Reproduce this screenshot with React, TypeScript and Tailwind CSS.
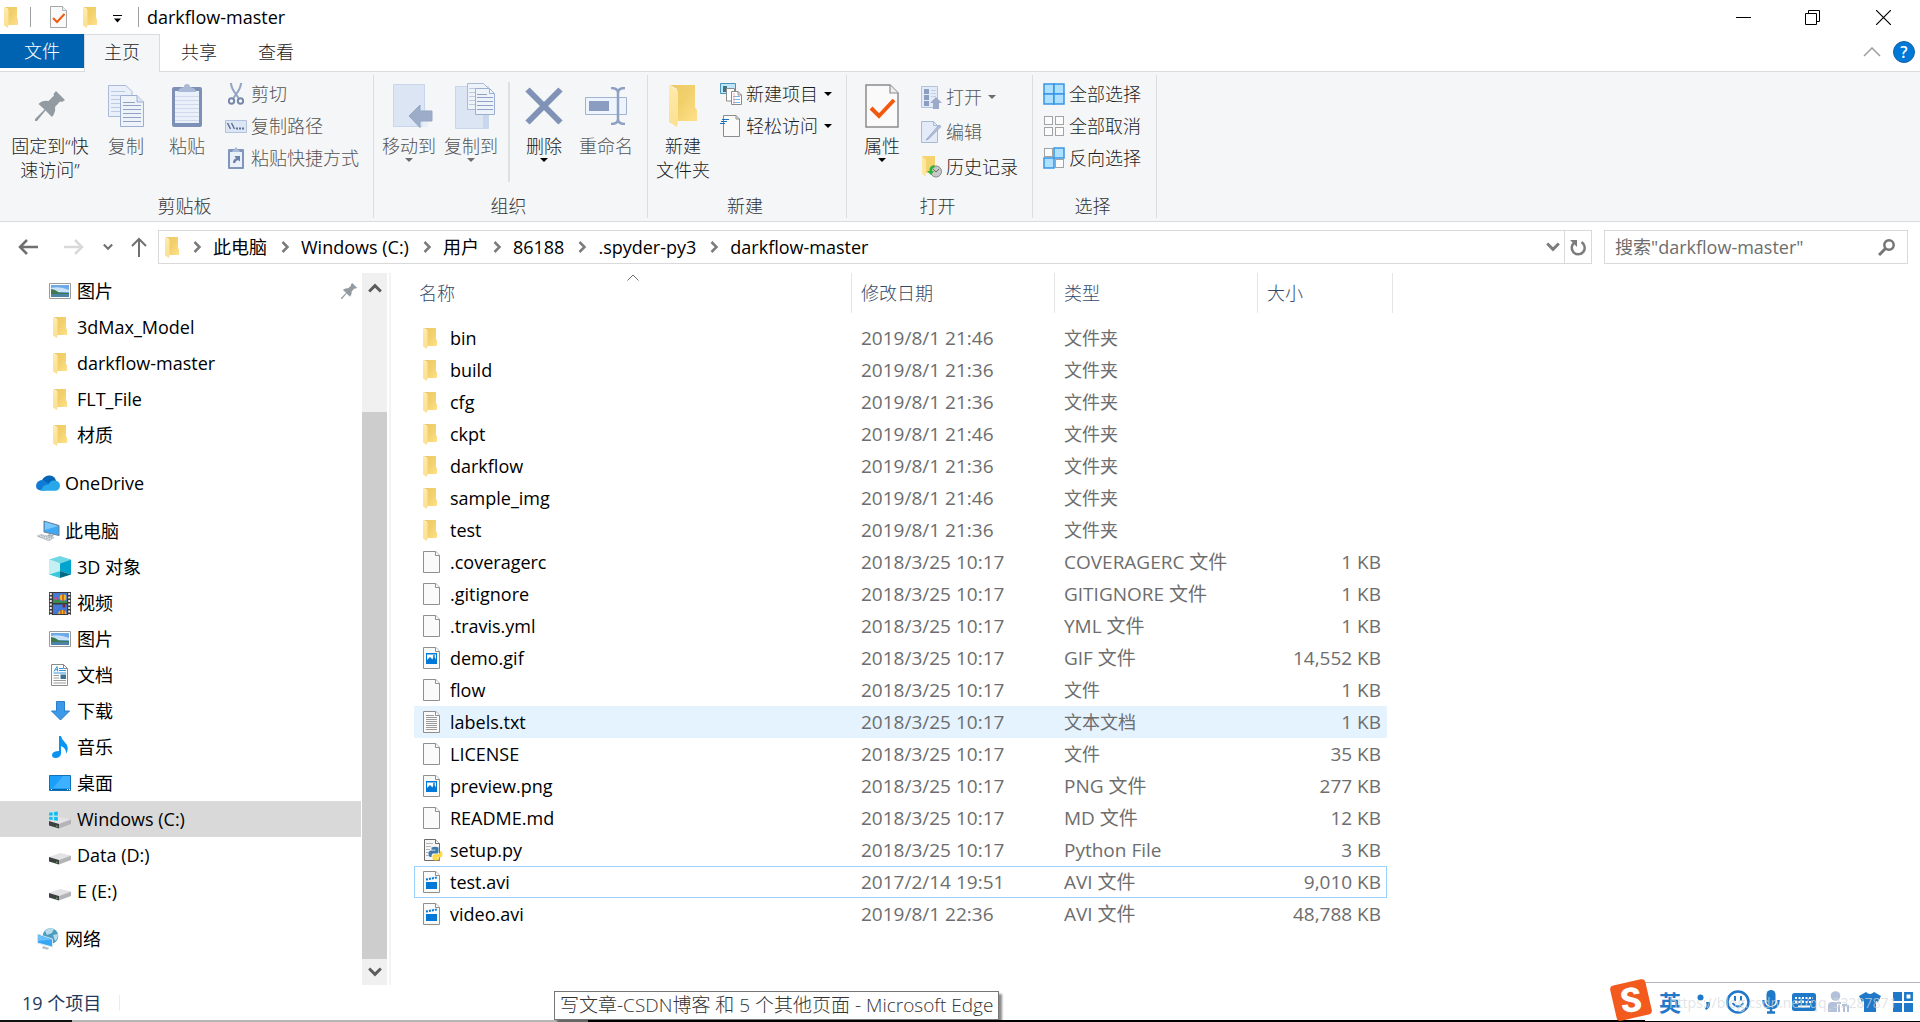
import type { ReactNode } from "react";
import clsx from "clsx";

/* ---------- icons ---------- */

const FolderIcon = ({ className = "w-[14px] h-[21px]" }: { className?: string }) => (
  <svg viewBox="0 0 28 42" className={className}>
    <defs>
      <linearGradient id="folderBack" x1="0" y1="0" x2="1" y2="1">
        <stop offset="0" stopColor="#edc965" />
        <stop offset="0.5" stopColor="#f2d16d" />
        <stop offset="1" stopColor="#ffe08c" />
      </linearGradient>
      <linearGradient id="folderFlap" x1="0" y1="0" x2="0" y2="1">
        <stop offset="0" stopColor="#ffeaa8" />
        <stop offset="1" stopColor="#fbe093" />
      </linearGradient>
    </defs>
    <path d="M1 0h25v22l2 3v11H8V4z" fill="url(#folderBack)" />
    <path d="M0 0l9 6v30l-1 6-8-5z" fill="url(#folderFlap)" />
  </svg>
);

const PageIcon = ({ children }: { children?: ReactNode }) => (
  <svg viewBox="0 0 20 22" className="w-5 h-[22px]">
    <path d="M.5.5h12.3l3.7 3.7v17.3H.5z" fill="#fafafa" stroke="#8f8f8f" />
    <path d="M12.5.5v4h4" fill="#fff" stroke="#8f8f8f" />
    {children}
  </svg>
);

const ImageFileIcon = () => (
  <PageIcon>
    <path d="M3 6h11v11H3z" fill="#0078d7" />
    <path d="M4 7.500h9v5l-1-2-1.500-1-1 3-2.500-2.500L4 13z" fill="#fff" />
    <circle cx="11" cy="9" r="1" fill="#0078d7" />
  </PageIcon>
);

const VideoFileIcon = () => (
  <PageIcon>
    <path d="M3 11h11v7H3z" fill="#0078d7" />
    <path d="M3 8.500l11-2" stroke="#0078d7" strokeWidth="2" strokeDasharray="2 1" />
  </PageIcon>
);

const TextFileIcon = () => (
  <PageIcon>
    <path d="M3 4.500h8M3 6.500h11M3 8.500h11M3 10.500h11M3 12.500h11M3 14.500h11M3 16.500h11M3 18.500h11" stroke="#9a9a9a" />
  </PageIcon>
);

const PythonFileIcon = () => (
  <svg viewBox="0 0 20 22" className="w-5 h-[22px]">
    <path d="M1.500.5h11l4 4v17h-15z" fill="#f6f6f6" stroke="#6b6b6b" />
    <path d="M12.500.5v4h4" fill="#fff" stroke="#6b6b6b" />
    <path d="M3 4.500h7M3 7.500h5M3 10.500h4M3 13.500h3M3 16.500h3" stroke="#b5b5b5" />
    <path d="M8.500 8.500q3.500-1.500 7 0V13q0 1.500-1.500 1.500h-4Q8.500 14.500 8.500 18H7q-1.500-1-1.500-3.500 0-2.500 2-3h5v-.7h-4z" fill="#3d7aab" />
    <path d="M17 12q2.500 0 2.500 3.500 0 2.500-2 3h-4v.8h3v1.200q-3.500 2-7 0V17q0-1.800 2-1.800h3.500Q17 15 17 12z" fill="#ffd946" />
  </svg>
);

const PictureIcon = () => (
  <svg viewBox="0 0 22 16" className="w-[22px] h-4">
    <path d="M.5.5h21v15H.5z" fill="#fff" stroke="#9b9b9b" />
    <path d="M2 2h18v12H2z" fill="#6ea9ea" />
    <path d="M2 5q9-2 18 2v2H2z" fill="#c9e2f7" />
    <path d="M2 6l4 1 4 2.500 10 .5v1H2z" fill="#3f7a4f" />
    <path d="M2 11h18v3H2z" fill="#4c84a8" />
  </svg>
);

const PinIcon = ({ className }: { className: string }) => (
  <svg viewBox="0 0 30 30" className={className}>
    <path d="M21 0l9 9-3 2-2-.5-5 5.500q1 5-3 10l-6.500-6.500L2 30H0v-2l9.500-9.500L3.500 13q4-4 10-3L19 4.500 18.500 3z" fill="#929ba1" />
  </svg>
);

const CloudIcon = () => (
  <svg viewBox="0 0 24 16" className="w-6 h-4 shrink-0">
    <path d="M6 5q3-5 8-4.500Q19 1 20 6l-8 5z" fill="#0364b8" />
    <path d="M5 15.500Q0 15 0 10.500 1 5 7 5l10 6-8 4.500z" fill="#0f7bd4" />
    <path d="M17 5.500Q24 5 24 11q-.5 4.500-5 4.800H5Q7 9 12.500 9.500 14 6 17 5.500z" fill="#28a8ea" />
  </svg>
);

const ComputerIcon = () => (
  <svg viewBox="0 0 24 22" className="w-6 h-[22px] shrink-0">
    <path d="M8 1l15 4.500v10L8 12z" fill="#3fa9f5" stroke="#6d7f8d" />
    <path d="M9 2l13 4L9 10z" fill="#7cc7fb" />
    <path d="M13 14l5 1.500-2 1.500-5-1z" fill="#a7b1b8" />
    <path d="M1 16l4-1.500 13 3-5 3.500z" fill="#dfe3e6" stroke="#a8afb4" strokeWidth=".6" />
    <path d="M3 16.500l11 3M5 15.500l11 2.700" stroke="#8e979d" strokeWidth=".8" strokeDasharray="1.500 1" />
  </svg>
);

const CubeIcon = () => (
  <svg viewBox="0 0 22 22" className="w-[22px] h-[22px]">
    <path d="M11 0l11 3.500-11 4L0 3.500z" fill="#6fd8e4" />
    <path d="M0 3.500l11 4V15L0 18.500z" fill="#c4eff3" />
    <path d="M22 3.500l-11 4V15l11 3.500z" fill="#00a5cf" />
    <path d="M11 15l11 3.500L11 22z" fill="#036a83" />
    <path d="M11 15L0 18.500 11 22z" fill="#38c9dc" />
  </svg>
);

const FilmIcon = () => (
  <svg viewBox="0 0 22 23" className="w-[22px] h-[23px]">
    <path d="M0 0h22v23H0z" fill="#3a3a3a" />
    <path d="M1.800 1v22M20.200 1v22" stroke="#e8e8e8" strokeWidth="2" strokeDasharray="2 1.500" />
    <path d="M4 1h14v10H4zM4 12.500h14V22H4z" fill="#4479d6" />
    <path d="M4 8l4-2 3 3h7v2H4z" fill="#3c8a4c" />
    <circle cx="14" cy="5.500" r="3.300" fill="#f2b91d" />
    <path d="M14 2v7" stroke="#a32020" />
    <circle cx="7" cy="6.500" r="1.500" fill="#d9468a" />
    <circle cx="15" cy="14" r="1.500" fill="#8b2020" />
    <path d="M9 22q1-4 4.500-4t4 4z" fill="#f2b91d" />
    <path d="M12 18v4M15 18v4" stroke="#b02a2a" />
  </svg>
);

const DocumentIcon = () => (
  <svg viewBox="0 0 18 22" className="w-[18px] h-[22px]">
    <path d="M.5.5h12l4 4v17H.5z" fill="#fff" stroke="#8b8b8b" />
    <path d="M12.500.5v4h4" fill="none" stroke="#8b8b8b" />
    <path d="M3 7.500l3-5 .8 5M4 5.800h2.500M8 4.500h4M8 6.500h7M2.500 9h12.500" stroke="#2f97d8" fill="none" />
    <path d="M2.500 11.500H8M2.500 14H8M2.500 16.500H15M2.500 19H15" stroke="#9b9b9b" />
    <path d="M9.500 10.500H15V15H9.500z" fill="#3d7293" />
  </svg>
);

const DownloadIcon = () => (
  <svg viewBox="0 0 19 20" className="w-[19px] h-5">
    <path d="M5.500.5h8V10h5l-9 9-9-9h5z" fill="#3c98e8" stroke="#2b7ec9" />
  </svg>
);

const MusicIcon = () => (
  <svg viewBox="0 0 16 22" className="w-4 h-[22px]">
    <path d="M7 0h2q.5 3.500 4 6.500Q18 11 14 18q.5-6-5-8v8q-1 4-5.500 4Q0 22 0 19q.5-4 7-4z" fill="#0894f0" />
  </svg>
);

const DesktopIcon = () => (
  <svg viewBox="0 0 22 16" className="w-[22px] h-4">
    <path d="M.5.5h21v15H.5z" fill="#1aa0fb" stroke="#1172b5" />
    <path d="M14 1h7v12H4z" fill="#3db1ff" />
    <path d="M1 14.500h20" stroke="#0d5f9d" />
    <path d="M2 14.500h1M18 14.500h1M20 14.500h1" stroke="#fff" />
  </svg>
);

const DriveIcon = ({ system }: { system?: boolean }) => (
  <svg viewBox="0 0 22 20" className="w-[22px] h-5">
    <path d="M0 12l11-4 11 2.500L10 15z" fill="#e3e3e5" />
    <path d="M10 15l12-4.500V15l-12 4.500z" fill="#b4b4b8" />
    <path d="M0 12l10 3v4.500l-10-3z" fill="#3d3f40" />
    <path d="M7 16.500l1.500.4v1L7 17.500z" fill="#43e05a" />
    {system && (
      <path d="M0 3.500L3.800 3v3.800H0zM4.800 2.900L9 2.300v4.500H4.800zM0 7.700h3.800v3.600L0 10.800zM4.800 7.700H9v4.200l-4.200-.5z" fill="#0bbbf0" stroke="#e6f9ff" strokeWidth=".3" />
    )}
  </svg>
);

const NetworkIcon = () => (
  <svg viewBox="0 0 22 22" className="w-[22px] h-[22px]">
    <circle cx="13.500" cy="8" r="7.800" fill="#4a9dc0" />
    <path d="M8 3q4-4 9-2l-2 4-5 2zM16 7l5-1q0 5-3 7z" fill="#b7dcea" />
    <path d="M.5 6l15 5v8L.5 15z" fill="#36a6f5" stroke="#d6e6ef" />
    <path d="M1 7l14 4.500L1 13z" fill="#6bc0fa" />
    <path d="M6 18l6 2-1 1.800-6-1.500z" fill="#b3bcc2" />
  </svg>
);

const CheckedPageIcon = ({ className }: { className: string }) => (
  <svg viewBox="0 0 34 44" className={className}>
    <path d="M1 1h24l8 8v34H1z" fill="#fafafa" stroke="#8c8c8c" strokeWidth="1.500" />
    <path d="M25 1v8h8" fill="#eee" stroke="#8c8c8c" strokeWidth="1.200" />
    <path d="M6 24l8 8 15-16" fill="none" stroke="#f2590f" strokeWidth="4" />
  </svg>
);

const CopyIcon = () => (
  <svg viewBox="0 0 36 42" className="w-9 h-[42px]">
    <path d="M.5.5H18l6 6v25H.5z" fill="#eaf0f9" stroke="#a9b9d6" />
    <path d="M3 6.500h14M3 10.500h9M3 14.500h9M3 18.500h9M3 22.500h9M3 26.500h9" stroke="#bccae2" />
    <path d="M12.500 10.500H29l6.500 6.500v24.500h-23z" fill="#eef3fa" stroke="#9dafd0" />
    <path d="M29 10.500V17h6.500" fill="#dce6f5" stroke="#9dafd0" />
    <path d="M15 17.500h12M15 20.500h18M15 24.500h18M15 28.500h18M15 32.500h18M15 36.500h18" stroke="#8fa2c4" />
  </svg>
);

const ClipboardIcon = () => (
  <svg viewBox="0 0 30 43" className="w-[30px] h-[43px]">
    <rect y="3" width="30" height="40" rx="2" fill="#7d90b6" />
    <path d="M3 7h24v32H3z" fill="#eaf0fa" />
    <path d="M3 12.500h24M3 16.500h24M3 20.500h24M3 24.500h24M3 28.500h24M3 32.500h24M3 36.500h24" stroke="#cfdaed" />
    <path d="M6 8q0-4 6-5 0-3 3-3t3 3q6 1 6 5z" fill="#a9b9d6" />
  </svg>
);

const ScissorsIcon = () => (
  <svg viewBox="0 0 16 22" className="w-4 h-[22px]">
    <path d="M3 0q0 5 5.500 12l2 3M13 0q0 5-5.500 12l-2 3" fill="none" stroke="#93a4c2" strokeWidth="2" />
    <circle cx="3.500" cy="18" r="2.700" fill="none" stroke="#7688ab" strokeWidth="2" />
    <circle cx="12.500" cy="18" r="2.700" fill="none" stroke="#7688ab" strokeWidth="2" />
  </svg>
);

const CopyPathIcon = () => (
  <svg viewBox="0 0 22 13" className="w-[22px] h-[13px]">
    <path d="M.5.5h21v12H.5z" fill="#dce6f5" stroke="#b3c2dc" />
    <path d="M2.500 3l3 6M6.500 3l3 6" stroke="#5f7296" strokeWidth="1.500" />
    <path d="M11 8.500h9" stroke="#5f7296" strokeWidth="2" strokeDasharray="2 1" />
  </svg>
);

const PasteShortcutIcon = () => (
  <svg viewBox="0 0 16 22" className="w-4 h-[22px]">
    <rect y="2" width="16" height="20" rx="1" fill="#8295ba" />
    <path d="M2 5h12v15H2z" fill="#eaf0fa" />
    <path d="M4 5q0-2 2.500-2.500Q7 0 8 0t1.500 2.500Q12 3 12 5z" fill="#a9b9d6" />
    <path d="M5 16q0-4 3-4.500L6.500 9H12v5.500L10 13q-2 .5-3 3z" fill="#6d81a8" />
  </svg>
);

const MoveToIcon = () => (
  <svg viewBox="0 0 40 44" className="w-10 h-11 ml-2">
    <path d="M.5.5h31v42H.5z" fill="#dbe5f4" stroke="#c8d5ea" />
    <path d="M32 24l3 3v16h-6z" fill="#e8eff9" />
    <path d="M16 32l11-11v6h12v10H27v6.500z" fill="#9dadc9" stroke="#93a5c4" />
  </svg>
);

const CopyToIcon = () => (
  <svg viewBox="0 0 40 46" className="w-10 h-[46px] ml-2">
    <path d="M.5 3.500h33v42H.5z" fill="#dbe5f4" stroke="#c8d5ea" />
    <path d="M28 31h6v14h-6z" fill="#c9d7ec" />
    <path d="M12.500.5h16l4 4v22h-20z" fill="#eef3fa" stroke="#a9b9d6" />
    <path d="M14 5.500h10M14 9.500h6M14 13.500h6M14 17.500h6M14 21.500h6" stroke="#bccae2" />
    <path d="M20.500 5.500h14l5 5v21h-19z" fill="#eef3fa" stroke="#9dafd0" />
    <path d="M34.500 5.500v5h5" fill="none" stroke="#9dafd0" />
    <path d="M22 11.500h10M22 14.500h16M22 18.500h16M22 22.500h16M22 26.500h16" stroke="#8fa2c4" />
  </svg>
);

const DeleteIcon = () => (
  <svg viewBox="0 0 38 38" className="w-[38px] h-[38px]">
    <path d="M2.500 2.500l33 33M35.500 2.500l-33 33" stroke="#8093b6" strokeWidth="6" />
  </svg>
);

const RenameIcon = () => (
  <svg viewBox="0 0 42 38" className="w-[42px] h-[38px]">
    <path d="M.5 10.500h41v17H.5z" fill="#eef4fd" stroke="#a2b3d0" />
    <path d="M4 14h20v10H4z" fill="#8a9cbf" />
    <path d="M26 1q7 0 7 5v26q0 5-7 5M40 1q-7 0-7 5v26q0 5 7 5" fill="none" stroke="#8fa1c2" strokeWidth="2.500" />
  </svg>
);

const NewItemIcon = () => (
  <svg viewBox="0 0 22 22" className="w-[22px] h-[22px]">
    <path d="M.5.5h15v10H.5z" fill="#bfe5f8" stroke="#4894b8" />
    <path d="M3 3h4v6H3z" fill="#44727c" />
    <path d="M6.500 5.500h8V18h-8z" fill="#fff" stroke="#8c8c8c" />
    <path d="M11.500 8.500H18l3.500 3.500v9.500h-10z" fill="#fff" stroke="#8c8c8c" />
    <path d="M18 8.500V12h3.500" fill="none" stroke="#8c8c8c" />
    <path d="M13 13.500h7M13 16.500h7M13 19.500h7" stroke="#7db6e8" />
    <path d="M14 10v11" stroke="#e79aa4" strokeWidth=".8" />
  </svg>
);

const EasyAccessIcon = () => (
  <svg viewBox="0 0 22 22" className="w-[22px] h-[22px]">
    <path d="M3.500.5H16L19.500 4v17.500h-16z" fill="#fafafa" stroke="#8c8c8c" />
    <path d="M16 .5V4h3.500" fill="none" stroke="#8c8c8c" />
    <path d="M2 4.500h7M1 6.500h6M0 8.500h5" stroke="#1d6fb8" />
  </svg>
);

const OpenIcon = () => (
  <svg viewBox="0 0 21 23" className="w-[21px] h-[23px]">
    <path d="M.5.5h16v21H.5z" fill="#e3ebf8" stroke="#b3c2dc" />
    <path d="M3 3h5v5H3zM3 9h5v5H3zM3 15h5v5H3z" fill="#8b9dc1" />
    <path d="M10 4.500h5M10 7.500h5M10 10.500h5" stroke="#c3d0e5" />
    <path d="M15 11l6 6h-3v6h-6v-6H9z" fill="#9baaca" />
  </svg>
);

const EditIcon = () => (
  <svg viewBox="0 0 21 22" className="w-[21px] h-[22px]">
    <path d="M.5.5h12l4 4v17H.5z" fill="#e3ebf8" stroke="#a9b9d6" />
    <path d="M12.500.5v4h4" fill="none" stroke="#a9b9d6" />
    <path d="M5 19L18 4l2 1.500L7.500 18z" fill="#b4c1da" stroke="#8ea0c2" strokeWidth=".8" />
  </svg>
);

const HistoryIcon = () => (
  <svg viewBox="0 0 21 22" className="w-[21px] h-[22px]">
    <path d="M1 0h13v17H4z" fill="#f5d36e" />
    <path d="M1 0l4 4v17l-4-3z" fill="#fde6a0" />
    <circle cx="15" cy="15.500" r="5.500" fill="#c8c8c8" stroke="#888" />
    <path d="M12 13l3 3 3-3" fill="none" stroke="#666" />
    <path d="M13 9Q8 10 8.500 15H6l4 4 3-4h-2q0-3 3-4z" fill="#2fb43a" />
  </svg>
);

const Tile = ({ x, y, on }: { x: number; y: number; on?: boolean }) =>
  on ? (
    <rect x={x} y={y} width="10" height="10" fill="#aee0ff" stroke="#3795e6" strokeWidth="1.500" />
  ) : (
    <rect x={x + 0.5} y={y + 0.5} width="8" height="8" fill="#fcfcfc" stroke="#a3a3a3" />
  );

const TilesIcon = ({ on }: { on: boolean[] }) => (
  <svg viewBox="0 0 22 22" className="w-[22px] h-[22px]">
    <Tile x={1} y={1} on={on[0]} />
    <Tile x={on[1] ? 11 : 12} y={1} on={on[1]} />
    <Tile x={1} y={on[2] ? 11 : 12} on={on[2]} />
    <Tile x={on[3] ? 11 : 12} y={on[3] ? 11 : 12} on={on[3]} />
  </svg>
);

const Caret = ({ className }: { className?: string }) => (
  <svg viewBox="0 0 8 4" className={clsx("w-2 h-1", className)}>
    <path d="M0 0h8L4 4z" fill="currentColor" />
  </svg>
);

const Chevron = ({ dir, className }: { dir: "up" | "down" | "right"; className: string }) => (
  <svg viewBox="0 0 12 12" className={className}>
    <path
      d={dir === "up" ? "M1 9l5-5 5 5" : dir === "down" ? "M1 3l5 5 5-5" : "M3.500 1l5 5-5 5"}
      fill="none"
      stroke="currentColor"
      strokeWidth="2.500"
    />
  </svg>
);

/* ---------- ribbon ---------- */

type BigProps = { icon: ReactNode; lines: string[]; disabled?: boolean; caret?: boolean; className: string };

const BigButton = ({ icon, lines, disabled, caret, className }: BigProps) => (
  <button disabled={disabled} className={clsx("flex flex-col items-center shrink-0 pt-1", disabled ? "text-[#555]" : "text-[#1c1c1c]", className)}>
    <span className="h-[55px] pb-[2px] flex items-center justify-center">{icon}</span>
    {lines.map((l) => (
      <span key={l} className="leading-6 whitespace-nowrap">{l}</span>
    ))}
    {caret && <Caret className={disabled ? "text-[#6d6d6d]" : "text-black"} />}
  </button>
);

type SmallProps = { icon: ReactNode; label: string; disabled?: boolean; caret?: boolean };

const SmallButton = ({ icon, label, disabled, caret }: SmallProps) => (
  <button disabled={disabled} className={clsx("flex items-center gap-1 h-8", disabled ? "text-[#555]" : "text-[#1c1c1c]")}>
    <span className="w-[22px] flex justify-center">{icon}</span>
    <span className="whitespace-nowrap">{label}</span>
    {caret && <Caret className={clsx("ml-[2px]", disabled ? "text-[#6d6d6d]" : "text-black")} />}
  </button>
);

const Group = ({ label, className, children }: { label: string; className: string; children: ReactNode }) => (
  <section className={clsx("flex flex-col shrink-0 border-r border-[#dcdddf]", className)}>
    <div className="flex grow pl-1">{children}</div>
    <h2 className="pr-1 text-center leading-6 text-[#333]">{label}</h2>
  </section>
);

const Ribbon = () => (
  <div className="flex bg-[#f5f6f7] border-y border-[#dadbdc] h-[151px] py-[3px] font-light">
    <Group label="剪贴板" className="w-[374px]">
      <BigButton className="w-[92px]" icon={<PinIcon className="w-[30px] h-[30px]" />} lines={["固定到“快", "速访问”"]} />
      <BigButton className="w-[60px]" disabled icon={<CopyIcon />} lines={["复制"]} />
      <BigButton className="w-[62px]" disabled icon={<ClipboardIcon />} lines={["粘贴"]} />
      <div className="pt-[3px] pl-[7px]">
        <SmallButton disabled icon={<ScissorsIcon />} label="剪切" />
        <SmallButton disabled icon={<CopyPathIcon />} label="复制路径" />
        <SmallButton disabled icon={<PasteShortcutIcon />} label="粘贴快捷方式" />
      </div>
    </Group>
    <Group label="组织" className="w-[274px]">
      <BigButton className="w-[62px]" disabled caret icon={<MoveToIcon />} lines={["移动到"]} />
      <BigButton className="w-[62px]" disabled caret icon={<CopyToIcon />} lines={["复制到"]} />
      <div className="w-[2px] h-[100px] mt-[7px] ml-[6px] bg-[#dfe0e2]" />
      <BigButton className="w-[68px]" caret icon={<DeleteIcon />} lines={["删除"]} />
      <BigButton className="w-14" disabled icon={<RenameIcon />} lines={["重命名"]} />
    </Group>
    <Group label="新建" className="w-[199px]">
      <BigButton className="w-[62px]" icon={<FolderIcon className="w-7 h-[42px]" />} lines={["新建", "文件夹"]} />
      <div className="pt-[3px] pl-[6px]">
        <SmallButton caret icon={<NewItemIcon />} label="新建项目" />
        <SmallButton caret icon={<EasyAccessIcon />} label="轻松访问" />
      </div>
    </Group>
    <Group label="打开" className="w-[186px]">
      <BigButton className="w-[62px]" caret icon={<CheckedPageIcon className="w-[34px] h-11" />} lines={["属性"]} />
      <div className="pt-[6px] pl-[7px] flex flex-col gap-[3px]">
        <SmallButton disabled caret icon={<OpenIcon />} label="打开" />
        <SmallButton disabled icon={<EditIcon />} label="编辑" />
        <SmallButton icon={<HistoryIcon />} label="历史记录" />
      </div>
    </Group>
    <Group label="选择" className="w-[124px]">
      <div className="pt-[3px] pl-[6px]">
        <SmallButton icon={<TilesIcon on={[true, true, true, true]} />} label="全部选择" />
        <SmallButton icon={<TilesIcon on={[false, false, false, false]} />} label="全部取消" />
        <SmallButton icon={<TilesIcon on={[false, true, true, false]} />} label="反向选择" />
      </div>
    </Group>
  </div>
);

/* ---------- title bar and tabs ---------- */

const TitleBar = () => (
  <header className="flex items-center h-[34px] text-black">
    <div className="flex items-center grow pl-1">
      <FolderIcon />
      <span className="w-px h-5 ml-3 bg-[#a0a0a0]" />
      <button aria-label="属性" className="ml-[19px]"><CheckedPageIcon className="w-[17px] h-[22px]" /></button>
      <button aria-label="新建文件夹" className="ml-4"><FolderIcon /></button>
      <button aria-label="自定义快速访问工具栏" className="ml-4 pt-[3px]">
        <svg viewBox="0 0 9 8" className="w-[9px] h-2"><path d="M0 .5h9" stroke="#000" /><path d="M1 3.500h7L4.500 7.500z" /></svg>
      </button>
      <span className="w-px h-5 ml-4 bg-[#a0a0a0]" />
      <h1 className="ml-2 leading-6">darkflow-master</h1>
    </div>
    <button aria-label="最小化" className="w-[69px] flex justify-center">
      <svg viewBox="0 0 15 15" className="w-[15px] h-[15px]"><path d="M0 7.500h15" stroke="#000" /></svg>
    </button>
    <button aria-label="还原" className="w-[69px] flex justify-center">
      <svg viewBox="0 0 15 15" className="w-[15px] h-[15px]"><path d="M.5 3.500h11v11H.5zM3.500 3.500v-3h11v11h-3" fill="none" stroke="#000" /></svg>
    </button>
    <button aria-label="关闭" className="w-[73px] flex justify-center">
      <svg viewBox="0 0 15 15" className="w-[15px] h-[15px]"><path d="M0 0l15 15M15 0L0 15" stroke="#000" strokeWidth="1.200" /></svg>
    </button>
  </header>
);

const Tabs = () => (
  <nav className="flex h-[37px] text-[#1c1c1c] font-light">
    <button className="w-[84px] h-[34px] bg-[#0063b1] text-white">文件</button>
    <button className="w-[76px] -mb-px pb-[3px] relative bg-[#f5f6f7] border border-b-0 border-[#dadbdc]">主页</button>
    <button className="w-[78px] pb-[2px]">共享</button>
    <button className="w-[76px] pb-[2px]">查看</button>
    <div className="grow flex items-center justify-end gap-3 pr-[5px] pb-[2px]">
      <button aria-label="最小化功能区" className="text-[#9d9d9d]">
        <svg viewBox="0 0 18 10" className="w-[18px] h-[10px]"><path d="M1 9l8-8 8 8" fill="none" stroke="currentColor" strokeWidth="1.500" /></svg>
      </button>
      <button className="w-[22px] h-[22px] rounded-full bg-[#0078d7] border border-[#1060a8] text-white text-base leading-5 font-semibold">?</button>
    </div>
  </nav>
);

/* ---------- address row ---------- */

const crumbs = ["此电脑", "Windows (C:)", "用户", "86188", ".spyder-py3", "darkflow-master"];

const AddressBar = () => (
  <div className="flex items-center pt-2 pr-3 h-[42px] text-black">
    <div className="flex items-center w-[158px] shrink-0 text-[#707070]">
      <button aria-label="后退" className="ml-[18px]">
        <svg viewBox="0 0 20 16" className="w-5 h-4"><path d="M20 8H2M9 1L2 8l7 7" fill="none" stroke="currentColor" strokeWidth="2.500" /></svg>
      </button>
      <button aria-label="前进" className="ml-[26px] text-[#d9d9d9]">
        <svg viewBox="0 0 20 16" className="w-5 h-4"><path d="M0 8h18M11 1l7 7-7 7" fill="none" stroke="currentColor" strokeWidth="2.500" /></svg>
      </button>
      <button aria-label="最近浏览的位置" className="ml-[19px]"><Chevron dir="down" className="w-[10px] h-[10px]" /></button>
      <button aria-label="上移" className="ml-[18px]">
        <svg viewBox="0 0 16 20" className="w-4 h-5"><path d="M8 20V2M1 9l7-7 7 7" fill="none" stroke="currentColor" strokeWidth="2" /></svg>
      </button>
    </div>
    <div className="flex grow h-[34px] border border-[#d9d9d9]">
      <div className="flex items-center grow pl-[6px]">
        <FolderIcon />
        {crumbs.map((c) => (
          <span key={c} className="flex items-center">
            <Chevron dir="right" className="w-3 h-3 ml-3 mr-[10px] text-[#7c7c7c]" />
            <a href="#" className="whitespace-nowrap">{c}</a>
          </span>
        ))}
      </div>
      <button aria-label="上一个位置" className="px-1 text-[#7c7c7c]"><Chevron dir="down" className="w-[14px] h-[14px]" /></button>
      <button aria-label="刷新" className="w-[27px] border-l border-[#d9d9d9] flex items-center justify-center">
        <svg viewBox="0 0 17 17" className="w-[17px] h-[17px]">
          <path d="M11.500 3.200a6.500 6.500 0 1 1-7 .3" fill="none" stroke="#7c7c7c" strokeWidth="2.500" />
          <path d="M0 1h7v7z" fill="#7c7c7c" />
        </svg>
      </button>
    </div>
    <label className="flex items-center w-[304px] h-[34px] ml-3 pl-[10px] pr-3 border border-[#d9d9d9]">
      <input type="text" aria-label="搜索" placeholder={'搜索"darkflow-master"'} className="grow min-w-0 outline-none placeholder:text-[#6d6d6d]" />
      <svg viewBox="0 0 17 17" className="w-[17px] h-[17px]">
        <circle cx="11" cy="6" r="4.700" fill="none" stroke="#757575" strokeWidth="2.500" />
        <path d="M8 9l-7 7" stroke="#757575" strokeWidth="3" />
      </svg>
    </label>
  </div>
);

/* ---------- navigation pane ---------- */

type NavItem = { label: string; icon: ReactNode; top?: boolean; pinned?: boolean; active?: boolean };

const navSections: NavItem[][] = [
  [
    { label: "图片", icon: <PictureIcon />, pinned: true },
    { label: "3dMax_Model", icon: <FolderIcon /> },
    { label: "darkflow-master", icon: <FolderIcon /> },
    { label: "FLT_File", icon: <FolderIcon /> },
    { label: "材质", icon: <FolderIcon /> },
  ],
  [{ label: "OneDrive", icon: <CloudIcon />, top: true }],
  [
    { label: "此电脑", icon: <ComputerIcon />, top: true },
    { label: "3D 对象", icon: <CubeIcon /> },
    { label: "视频", icon: <FilmIcon /> },
    { label: "图片", icon: <PictureIcon /> },
    { label: "文档", icon: <DocumentIcon /> },
    { label: "下载", icon: <DownloadIcon /> },
    { label: "音乐", icon: <MusicIcon /> },
    { label: "桌面", icon: <DesktopIcon /> },
    { label: "Windows (C:)", icon: <DriveIcon system />, active: true },
    { label: "Data (D:)", icon: <DriveIcon /> },
    { label: "E (E:)", icon: <DriveIcon /> },
  ],
  [{ label: "网络", icon: <NetworkIcon />, top: true }],
];

const Sidebar = () => (
  <aside className="flex w-[391px] shrink-0 border-r-2 border-[#f3f3f3] text-black">
    <nav className="w-[361px] flex flex-col gap-3">
      {navSections.map((items, i) => (
        <ul key={i}>
          {items.map((it) => (
            <li key={it.label}>
              <a
                href="#"
                className={clsx("flex items-center h-9 gap-[6px] pr-[4px]", it.top ? "pl-[37px]" : "pl-[49px]", it.active && "bg-[#d9d9d9]")}
              >
                <span className="w-[22px] flex justify-center shrink-0">{it.icon}</span>
                <span className="grow">{it.label}</span>
                {it.pinned && <PinIcon className="w-4 h-4" />}
              </a>
            </li>
          ))}
        </ul>
      ))}
    </nav>
    <div className="w-[25px] ml-px bg-[#f0f0f0] flex flex-col items-center text-[#5c5c5c]">
      <button aria-label="向上滚动" className="h-[139px] pt-2 flex items-start"><Chevron dir="up" className="w-[14px] h-[14px]" /></button>
      <div className="w-full grow bg-[#cdcdcd]" />
      <button aria-label="向下滚动" className="h-[26px]"><Chevron dir="down" className="w-[14px] h-[14px]" /></button>
    </div>
  </aside>
);

/* ---------- file list ---------- */

type FileRow = { name: string; date: string; type: string; size?: string; icon: ReactNode; state?: "hover" | "focus" };

const files: FileRow[] = [
  { name: "bin", date: "2019/8/1 21:46", type: "文件夹", icon: <FolderIcon /> },
  { name: "build", date: "2019/8/1 21:36", type: "文件夹", icon: <FolderIcon /> },
  { name: "cfg", date: "2019/8/1 21:36", type: "文件夹", icon: <FolderIcon /> },
  { name: "ckpt", date: "2019/8/1 21:46", type: "文件夹", icon: <FolderIcon /> },
  { name: "darkflow", date: "2019/8/1 21:36", type: "文件夹", icon: <FolderIcon /> },
  { name: "sample_img", date: "2019/8/1 21:46", type: "文件夹", icon: <FolderIcon /> },
  { name: "test", date: "2019/8/1 21:36", type: "文件夹", icon: <FolderIcon /> },
  { name: ".coveragerc", date: "2018/3/25 10:17", type: "COVERAGERC 文件", size: "1 KB", icon: <PageIcon /> },
  { name: ".gitignore", date: "2018/3/25 10:17", type: "GITIGNORE 文件", size: "1 KB", icon: <PageIcon /> },
  { name: ".travis.yml", date: "2018/3/25 10:17", type: "YML 文件", size: "1 KB", icon: <PageIcon /> },
  { name: "demo.gif", date: "2018/3/25 10:17", type: "GIF 文件", size: "14,552 KB", icon: <ImageFileIcon /> },
  { name: "flow", date: "2018/3/25 10:17", type: "文件", size: "1 KB", icon: <PageIcon /> },
  { name: "labels.txt", date: "2018/3/25 10:17", type: "文本文档", size: "1 KB", icon: <TextFileIcon />, state: "hover" },
  { name: "LICENSE", date: "2018/3/25 10:17", type: "文件", size: "35 KB", icon: <PageIcon /> },
  { name: "preview.png", date: "2018/3/25 10:17", type: "PNG 文件", size: "277 KB", icon: <ImageFileIcon /> },
  { name: "README.md", date: "2018/3/25 10:17", type: "MD 文件", size: "12 KB", icon: <PageIcon /> },
  { name: "setup.py", date: "2018/3/25 10:17", type: "Python File", size: "3 KB", icon: <PythonFileIcon /> },
  { name: "test.avi", date: "2017/2/14 19:51", type: "AVI 文件", size: "9,010 KB", icon: <VideoFileIcon />, state: "focus" },
  { name: "video.avi", date: "2019/8/1 22:36", type: "AVI 文件", size: "48,788 KB", icon: <VideoFileIcon /> },
];

const Th = ({ label, span, sorted }: { label: string; span?: number; sorted?: boolean }) => (
  <th colSpan={span} className="p-0 pb-[9px] font-light text-left">
    <div className={clsx("relative flex items-center h-10 border-r border-[#e5e5e5]", sorted ? "pl-[5px]" : "pl-[9px]")}>
      {label}
      {sorted && (
        <svg viewBox="0 0 12 7" className="absolute top-px left-1/2 w-3 h-[7px] -translate-x-1/2">
          <path d="M.5 6.500L6 1l5.500 5.500" fill="none" stroke="#6d6d6d" />
        </svg>
      )}
    </div>
  </th>
);

const FileList = () => (
  <main className="grow pl-[23px]">
    <table className="table-fixed w-[979px] border-separate border-spacing-0 text-[#6d6d6d]">
      <colgroup>
        <col className="w-[438px]" />
        <col className="w-[203px]" />
        <col className="w-[203px]" />
        <col className="w-[129px]" />
        <col className="w-[6px]" />
      </colgroup>
      <thead className="text-[#34496a]">
        <tr>
          <Th label="名称" sorted />
          <Th label="修改日期" />
          <Th label="类型" />
          <Th label="大小" span={2} />
        </tr>
      </thead>
      <tbody>
        {files.map((f) => {
          const cell = clsx(
            "p-0 h-8 leading-6 border-y",
            f.state === "focus" ? "border-[#99d1ff]" : "border-transparent",
            f.state === "hover" && "bg-[#e5f3ff]"
          );
          return (
            <tr key={f.name}>
              <td className={clsx(cell, "border-l text-black")}>
                <div className="flex items-center gap-[9px] pl-2 h-[30px]">
                  <span className="w-[18px] shrink-0">{f.icon}</span>
                  {f.name}
                </div>
              </td>
              <td className={clsx(cell, "pl-[9px] text-[19px]")}>{f.date}</td>
              <td className={clsx(cell, "pl-[9px]", /^[A-Z]/.test(f.type) && "text-[19px]")}>{f.type}</td>
              <td className={clsx(cell, "border-r pr-[5px] text-right text-[19px]")}>{f.size}</td>
            </tr>
          );
        })}
      </tbody>
    </table>
  </main>
);

/* ---------- status bar, tooltip, input method bar ---------- */

const ImeBar = () => (
  <div className="absolute right-0 bottom-[1px] w-[311px] h-[43px] flex items-end text-[#1f78c8]">
    <div className="absolute inset-x-0 bottom-0 h-[39px] ml-9 bg-white border-t border-[#b4b4bc]" />
    <svg viewBox="0 0 44 43" className="relative w-11 h-[43px] shrink-0">
      <rect x="4" y="4" width="36" height="36" rx="4" fill="#f25a1e" transform="rotate(-13 22 22)" />
      <text x="22" y="34" textAnchor="middle" fontFamily="Roboto" fontWeight="900" fontSize="34" fill="#fff" transform="rotate(-8 22 22)">S</text>
    </svg>
    <div className="relative grow h-[38px] flex items-center justify-between pl-[6px] pr-[7px]">
      <span className="mr-1 text-[22px] font-bold">英</span>
      <svg viewBox="0 0 14 16" className="w-[14px] h-4 mr-[2px]"><circle cx="3.500" cy="3.500" r="3" fill="currentColor" /><path d="M9 8h4q1 5-4 8l-1-1.500q2.500-2 1-6.500z" fill="currentColor" /></svg>
      <svg viewBox="0 0 24 24" className="w-6 h-6">
        <circle cx="12" cy="12" r="10.500" fill="none" stroke="currentColor" strokeWidth="2.500" />
        <path d="M9 6v5M15 6v5M6.500 13q5.500 7 11 0" fill="none" stroke="currentColor" strokeWidth="2" />
      </svg>
      <svg viewBox="0 0 18 24" className="w-[18px] h-6">
        <rect x="4.500" width="9" height="16" rx="4.500" fill="currentColor" />
        <path d="M1.500 10q0 8 7.500 8t7.500-8M9 18v4M5 22.500h8" fill="none" stroke="currentColor" strokeWidth="2.500" />
      </svg>
      <svg viewBox="0 0 24 18" className="w-6 h-[18px]">
        <rect width="24" height="18" rx="2.500" fill="currentColor" />
        <path d="M3 5h18M3 9h18" stroke="#fff" strokeWidth="2" strokeDasharray="2 1.500" />
        <path d="M6 13.500h12" stroke="#fff" strokeWidth="2" />
      </svg>
      <svg viewBox="0 0 22 22" className="w-[22px] h-[22px]">
        <circle cx="7.500" cy="5" r="4.800" fill="#b3c0da" />
        <path d="M0 21v-6q0-4 4-4h9v10z" fill="#b3c0da" />
        <path d="M9 13h12v8H9z" fill="#fff" />
        <path d="M11 14v7M14 14h5M16 14v7M20 14v7" stroke="#b3c0da" strokeWidth="2" />
      </svg>
      <svg viewBox="0 0 22 20" className="w-[22px] h-5 -ml-1">
        <path d="M7 0q4 4 8 0l7 4-3 6-2-1v11H5V9l-2 1-3-6z" fill="currentColor" />
      </svg>
      <svg viewBox="0 0 20 20" className="w-5 h-5">
        <path d="M0 0h9v9H0zM0 11h9v9H0zM11 11h9v9h-9z" fill="currentColor" />
        <path d="M12.300 1.300h6.400v6.400h-6.400z" fill="#fff" stroke="currentColor" strokeWidth="2.500" />
      </svg>
      <span className="absolute left-4 top-2 text-sm leading-6 text-[#d3d7dc]/70 whitespace-nowrap">https://blog.csdn.net/qq_33287871</span>
    </div>
  </div>
);

const StatusBar = () => (
  <footer className="relative shrink-0">
    <div className="flex items-center h-[35px] pl-[22px] text-[#1e395b]">
      <span>19 个项目</span>
      <span className="w-px h-4 ml-[18px] bg-[#ececec]" />
    </div>
    <div className="flex h-[2px]">
      <div className="w-[72px] bg-[#111]" />
      <div className="w-[516px] bg-[#b5b5b5]" />
      <div className="grow bg-black" />
    </div>
    <div role="tooltip" className="absolute left-[554px] bottom-[2px] h-[29px] px-[5px] text-[19px] leading-[27px] font-light bg-white border border-[#767676] text-[#333] whitespace-nowrap shadow-[3px_3px_2px_rgba(0,0,0,0.45)]">
      写文章-CSDN博客 和 5 个其他页面 - Microsoft Edge
    </div>
    <ImeBar />
  </footer>
);

const App = () => {
  return (
    <div className="flex flex-col h-screen overflow-hidden bg-white text-[18px] leading-6 font-['Open_Sans','Noto_Sans_CJK_SC',sans-serif]">
      <TitleBar />
      <Tabs />
      <Ribbon />
      <AddressBar />
      <div className="flex grow min-h-0 mt-[9px]">
        <Sidebar />
        <FileList />
      </div>
      <StatusBar />
    </div>
  );
};

export default App;
